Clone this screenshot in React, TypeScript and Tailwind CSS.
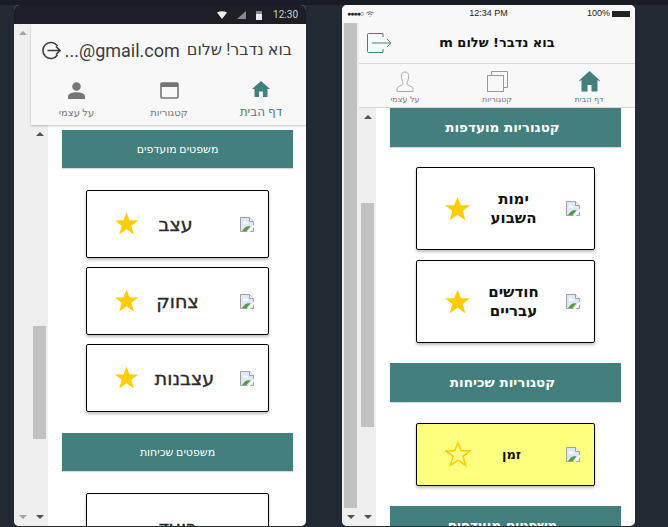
import React from "react";

// the browser's broken image glyph
const BrokenImage = () => (
  <svg width="14" height="15" viewBox="0 0 14 15" className="shrink-0">
    <path d="M0.5 0.5H9.5L13.5 4.5V14.5H0.5Z" fill="#dfe8fb" stroke="#a0a0a0" />
    <path d="M9.5 0.5V4.5H13.5" fill="#fff" stroke="#a0a0a0" />
    <path d="M3 5.5a1.6 1.6 0 0 1 3 -0.5a1.4 1.4 0 0 1 2 1.5H3Z" fill="#fff" />
    <path d="M2 14L5 10.5C7 9 9 9 10.5 9.5L6.5 14Z" fill="#4f9e3a" />
    <path d="M7 15L14 7.5V10L10 15Z" fill="#fff" />
  </svg>
);

const Star = ({ size, hollow = false }: { size: number; hollow?: boolean }) => (
  <svg width={size} height={size} viewBox="0 0 24 24" className="shrink-0">
    <path
      d="M12 1.5L15 9.1H23.2L16.6 14.2L19 22.5L12 17.6L5 22.5L7.4 14.2L0.8 9.1H9Z"
      fill={hollow ? "none" : "#ffcc00"}
      stroke={hollow ? "#ffcc00" : "none"}
      strokeWidth={hollow ? 1.4 : 0}
    />
  </svg>
);

const Up = ({ color = "#505050" }: { color?: string }) => (
  <div className="w-0 h-0 border-x-[4px] border-x-transparent border-b-[4px]" style={{ borderBottomColor: color }} />
);
const Down = ({ color = "#505050" }: { color?: string }) => (
  <div className="w-0 h-0 border-x-[4px] border-x-transparent border-t-[4px]" style={{ borderTopColor: color }} />
);

const Banner = ({ text, className }: { text: string; className: string }) => (
  <div className={`bg-[#437f7d] text-white flex items-center justify-center shadow-[0_1px_1px_rgba(0,0,0,0.15)] ${className}`}>
    {text}
  </div>
);

const Card = ({
  label,
  className,
  labelClass,
  starSize,
  hollow,
  starBox,
  noStar,
}: {
  label: React.ReactNode;
  className: string;
  labelClass: string;
  starSize: number;
  hollow?: boolean;
  starBox: string;
  noStar?: boolean;
}) => (
  <div className={`border border-black rounded-[2px] shadow-[0_2px_3px_rgba(0,0,0,0.25)] flex items-center ${className}`}>
    <div className="w-[28px] flex justify-end">{!noStar && <BrokenImage />}</div>
    <div className={`flex-1 text-center ${labelClass}`}>{label}</div>
    <div className={`flex justify-start ${starBox}`}>{!noStar && <Star size={starSize} hollow={hollow} />}</div>
  </div>
);

function AndroidPhone() {
  const cardLabel = "text-[19px] text-[#2a2a2a] font-['DejaVu_Sans',sans-serif] [-webkit-text-stroke:0.4px_#2a2a2a]";
  return (
    <div className="w-[292px] h-[521px] rounded-[5px] overflow-hidden bg-white flex flex-col font-['Roboto','DejaVu_Sans',sans-serif]">
      <div className="h-[19px] bg-[#1c2026] shrink-0 flex items-center justify-end pr-[8px] gap-[10px] text-[#cfcfcf] text-[10px]">
        <svg width="10" height="8" viewBox="0 0 10 8"><path d="M0 1.5Q5 -1 10 1.5L5 8Z" fill="#eee" /></svg>
        <svg width="9" height="8" viewBox="0 0 9 8"><path d="M9 0V8H0Z" fill="#888" /></svg>
        <svg width="6" height="10" viewBox="0 0 6 10"><path d="M0 1H6V10H0Z" fill="#eee" /><rect y="1" width="6" height="3" fill="#888" /></svg>
        <span className="ml-[1px]">12:30</span>
      </div>
      <div className="flex flex-1 min-h-0">
        <div className="w-[17px] bg-[#efefef] shrink-0 flex flex-col items-center justify-between pt-[7px] pb-[7px]">
          <Up color="#a3a3a3" />
          <Down color="#a3a3a3" />
        </div>
        <div className="flex-1 flex flex-col min-w-0">
          <div className="h-[101px] bg-[#f8f8f8] shrink-0 shadow-[0_1px_2px_rgba(0,0,0,0.25)] z-10 flex flex-col">
            <div className="h-[52px] flex items-center justify-start pr-[14px] text-[#3c3c3c] text-[16px] whitespace-nowrap" dir="rtl">
              <span>בוא נדבר! שלום</span>
              <span dir="ltr" className="text-[18px] mr-[7px]">...@gmail.com</span>
              <svg width="19" height="19" viewBox="0 0 19 19" fill="none" stroke="#3c3c3c" strokeWidth="1.6" className="mr-[4px]">
                <path d="M15.5 5A8 8 0 1 0 15.5 14" />
                <path d="M5.5 9.5H18M14 5.5L18 9.5L14 13.5" />
              </svg>
            </div>
            <div className="flex flex-1" dir="rtl">
              <div className="w-[90px] flex flex-col items-center pt-[5px] text-[#437f7d] text-[12px] gap-[6px]">
                <svg width="18" height="16" viewBox="0 0 18 16"><path d="M7 16V10.5H11V16H15.5V8H18L9 0L0 8H2.5V16Z" fill="#437f7d" /></svg>
                <span>דף הבית</span>
              </div>
              <div className="w-[94px] flex flex-col items-center pt-[6px] text-[#757575] text-[10px] gap-[6px]">
                <svg width="19" height="17" viewBox="0 0 19 17" fill="none"><rect x="1" y="1" width="17" height="15" rx="1" stroke="#757575" strokeWidth="1.6" /><rect x="1" y="1" width="17" height="4" fill="#757575" /></svg>
                <span>קטגוריות</span>
              </div>
              <div className="flex-1 flex flex-col items-center pt-[6px] text-[#757575] text-[10px] gap-[6px]">
                <svg width="17" height="17" viewBox="0 0 17 17" fill="#757575"><circle cx="8.5" cy="4.5" r="4.3" /><path d="M0 17V14.5C0 11.5 5 10.3 8.5 10.3S17 11.5 17 14.5V17Z" /></svg>
                <span>על עצמי</span>
              </div>
            </div>
          </div>
          <div className="flex flex-1 min-h-0">
            <div className="w-[17px] bg-[#efefef] shrink-0 flex flex-col items-center pt-[7px] pb-[7px]">
              <Up />
              <div className="mt-[190px] w-[13px] h-[113px] bg-[#c1c1c1] self-start ml-[2px]" />
              <div className="flex-1" />
              <Down />
            </div>
            <div className="flex-1 min-w-0 overflow-hidden pt-[5px] flex flex-col" dir="rtl">
              <Banner text="משפטים מועדפים" className="ml-[14px] mr-[13px] h-[38px] shrink-0 text-[11px] pt-[2px]" />
              <div className="mt-[22px] ml-[38px] mr-[37px] flex flex-col gap-[9px] shrink-0">
                <Card label="עצב" className="h-[68px]" labelClass={`${cardLabel} pr-[28px]`} starSize={25} starBox="w-[52px] mb-[2px]" />
                <Card label="צחוק" className="h-[68px]" labelClass={`${cardLabel} pr-[24px]`} starSize={25} starBox="w-[52px] mb-[2px]" />
                <Card label="עצבנות" className="h-[68px]" labelClass={`${cardLabel} pr-[10px]`} starSize={25} starBox="w-[52px] mb-[2px]" />
              </div>
              <Banner text="משפטים שכיחות" className="ml-[14px] mr-[13px] h-[38px] shrink-0 mt-[21px] text-[11px] pt-[2px]" />
              <div className="mt-[22px] ml-[38px] mr-[37px] shrink-0">
                <Card label="כועד" className="h-[68px]" labelClass={`${cardLabel} pr-[24px]`} starSize={25} starBox="w-[52px]" noStar />
              </div>
            </div>
          </div>
        </div>
      </div>
    </div>
  );
}

function IosPhone() {
  const cardLabel = "font-bold leading-[19px] text-[#111]";
  return (
    <div className="w-[293px] h-[521px] rounded-[5px] overflow-hidden bg-white flex flex-col font-['DejaVu_Sans',sans-serif]">
      <div className="h-[18px] bg-[#f8f8f8] shrink-0 flex items-center justify-between px-[5px] text-[9px] text-[#222] font-['Liberation_Sans',sans-serif]">
        <div className="flex items-center gap-[3px] w-[80px]">
          <span className="tracking-[-1px] text-[7px]">●●●●○</span>
          <svg width="8" height="6" viewBox="0 0 8 6" fill="none" stroke="#444" strokeWidth="0.8"><path d="M0.5 2Q4 -0.5 7.5 2M2 3.5Q4 2 6 3.5M4 5.5V5" /></svg>
        </div>
        <span>12:34 PM</span>
        <div className="flex items-center justify-end gap-[2px] w-[80px]">
          <span>100%</span>
          <div className="w-[18px] h-[6px] bg-[#222]" />
        </div>
      </div>
      <div className="flex flex-1 min-h-0">
        <div className="w-[17px] bg-[#efefef] shrink-0 flex flex-col pb-[7px]">
          <div className="w-[13px] h-[485px] bg-[#c1c1c1] ml-[2px]" />
          <div className="flex-1" />
          <div className="self-center"><Down /></div>
        </div>
        <div className="flex-1 flex flex-col min-w-0">
          <div className="h-[85px] bg-[#f8f8f8] shrink-0 flex flex-col border-b border-[#d9d9d9]">
            <div className="h-[41px] flex items-center border-b border-[#d9d9d9]">
              <svg width="25" height="20" viewBox="0 0 25 20" fill="none" stroke="#437f7d" className="ml-[8px] shrink-0">
                <path d="M16 4V0.5H1.5Q0.5 0.5 0.5 1.5V18.5Q0.5 19.5 1.5 19.5H16V16M5 10H24M20 6L24 10L20 14" />
              </svg>
              <div className="flex-1 text-center text-[13px] font-bold text-[#111]" dir="rtl">בוא נדבר! שלום m</div>
              <div className="w-[33px]" />
            </div>
            <div className="flex flex-1" dir="rtl">
              <div className="w-[92px] flex flex-col items-center text-[#437f7d] text-[8px] pt-[7px] gap-[2px]">
                <svg width="21" height="21" viewBox="0 0 21 21"><path d="M10.5 0L21 9.5L20.3 10.3L18.5 8.7V20.5H12.5V14H8.5V20.5H2.5V8.7L0.7 10.3L0 9.5Z" fill="#437f7d" /></svg>
                <span>דף הבית</span>
              </div>
              <div className="w-[92px] flex flex-col items-center text-[#757575] text-[8px] pt-[7px] gap-[2px]">
                <svg width="21" height="21" viewBox="0 0 21 21" fill="none" stroke="#999"><rect x="0.5" y="4.5" width="16" height="16" /><path d="M4.5 4.5V0.5H20.5V16.5H16.5" /></svg>
                <span>קטגוריות</span>
              </div>
              <div className="flex-1 flex flex-col items-center text-[#757575] text-[8px] pt-[7px] gap-[2px]">
                <svg width="18" height="21" viewBox="0 0 18 21" fill="none" stroke="#aaa"><path d="M9 1C5.5 1 5 4 5.5 7C6 10 7 11 7 13C7 14.5 1 15 1 18V20.5H17V18C17 15 11 14.5 11 13C11 11 12 10 12.5 7C13 4 12.5 1 9 1Z" /></svg>
                <span>על עצמי</span>
              </div>
            </div>
          </div>
          <div className="flex flex-1 min-h-0">
            <div className="w-[17px] bg-[#efefef] shrink-0 flex flex-col items-center pt-[7px] pb-[7px]">
              <Up />
              <div className="mt-[84px] w-[13px] h-[224px] bg-[#c1c1c1]" />
              <div className="flex-1" />
              <Down />
            </div>
            <div className="flex-1 min-w-0 overflow-hidden flex flex-col" dir="rtl">
              <Banner text="קטגוריות מועדפות" className="mx-[14px] pr-[6px] h-[39px] shrink-0 text-[13.5px] font-bold" />
              <div className="mt-[20px] ml-[40px] mr-[40px] flex flex-col gap-[10px] shrink-0">
                <Card label={<>ימות<br />השבוע</>} className="h-[83px]" labelClass={`text-[15px] pr-[10px] ${cardLabel}`} starSize={27} starBox="w-[54px]" />
                <Card label={<>חודשים<br />עבריים</>} className="h-[83px]" labelClass={`text-[15px] pr-[10px] ${cardLabel}`} starSize={27} starBox="w-[54px]" />
              </div>
              <Banner text="קטגוריות שכיחות" className="mx-[14px] pr-[6px] h-[39px] shrink-0 mt-[20px] text-[13.5px] font-bold" />
              <div className="mt-[21px] ml-[40px] mr-[40px] shrink-0">
                <Card label="זמן" className="h-[63px] bg-[#ffff80]" labelClass={`text-[13px] pr-[14px] ${cardLabel}`} starSize={26} starBox="w-[54px] mb-[2px]" hollow />
              </div>
              <Banner text="משפטים מועדפים" className="mx-[14px] pr-[6px] h-[39px] shrink-0 mt-[20px] text-[13.5px] font-bold" />
            </div>
          </div>
        </div>
      </div>
    </div>
  );
}

export default function App() {
  return (
    <div className="w-[668px] h-[527px] bg-[#222a33] overflow-hidden flex flex-col">
      <div className="h-[5px] bg-[#171c26] shrink-0" />
      <div className="pl-[14px] flex gap-[36px]">
        <AndroidPhone />
        <IosPhone />
      </div>
    </div>
  );
}
